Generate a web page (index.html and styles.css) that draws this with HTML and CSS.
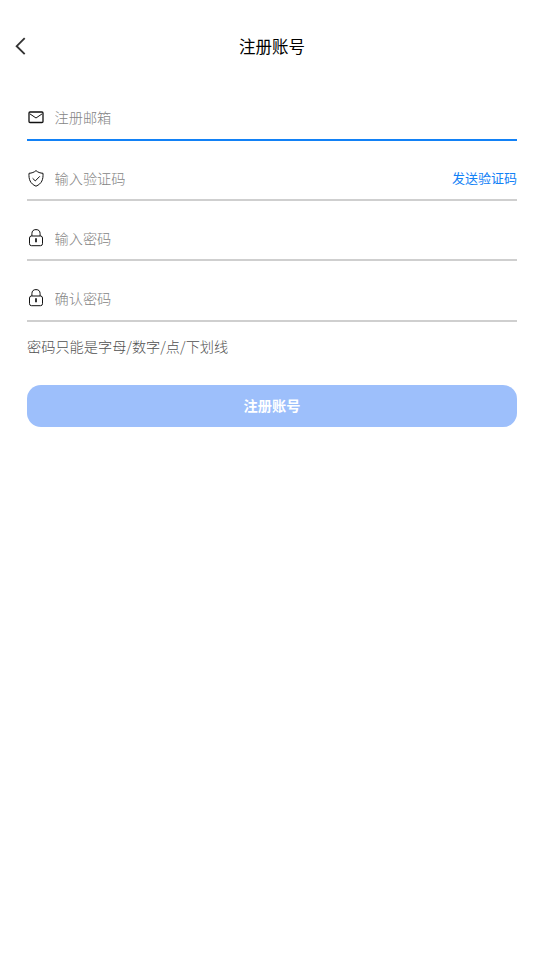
FILE: index.html
```html
<!DOCTYPE html>
<html lang="zh-CN">
<head>
<meta charset="utf-8">
<title>注册账号</title>
<link rel="stylesheet" href="styles.css">
</head>
<body>
<header class="bar">
  <button class="back" aria-label="返回"><svg width="12" height="20" viewBox="0 0 12 20"><path d="M9.700 2.200 1.700 10.200l8 8"/></svg></button>
  <h1 class="title">注册账号</h1>
</header>
<main class="form">
  <div class="field active">
    <svg class="icon" viewBox="0 0 18 18"><rect x="2" y="4" width="14" height="10.500" rx="1"/><path class="thin" d="m2.800 5.800 6.200 4.200 6.200-4.200"/></svg>
    <input type="text" placeholder="注册邮箱">
  </div>
  <div class="field">
    <svg class="icon" viewBox="0 0 18 18"><path class="thin" d="M9 1.600C7.300 3.200 4.700 4.200 2 4.300c-.3 6 1 10.300 7 12.900 6-2.600 7.300-6.900 7-12.900-2.700-.1-5.300-1.100-7-2.700ZM5.600 9.300l2.700 2.600 4.500-4.600"/></svg>
    <input type="text" placeholder="输入验证码">
    <button class="send">发送验证码</button>
  </div>
  <div class="field">
    <svg class="icon" viewBox="0 0 18 18"><path class="thin" d="M4.900 7V4.700a4.100 4.100 0 0 1 8.200 0V7"/><rect class="thin" x="2.500" y="7" width="13" height="9.700" rx="2"/><path class="key" d="M9 9.200v4"/></svg>
    <input type="password" placeholder="输入密码">
  </div>
  <div class="field">
    <svg class="icon" viewBox="0 0 18 18"><path class="thin" d="M4.900 7V4.700a4.100 4.100 0 0 1 8.200 0V7"/><rect class="thin" x="2.500" y="7" width="13" height="9.700" rx="2"/><path class="key" d="M9 9.200v4"/></svg>
    <input type="password" placeholder="确认密码">
  </div>
  <p class="hint">密码只能是字母/数字/点/下划线</p>
  <button class="submit">注册账号</button>
</main>
</body>
</html>
```
FILE: styles.css
```css
* { box-sizing: border-box; }
body { margin: 0; min-height: 980px; background: #fff; color: #000; font-family: "Noto Sans CJK SC", sans-serif; }
button, input { font: inherit; border: 0; padding: 0; background: none; }
svg { display: block; fill: none; stroke: #111; }
.bar { display: grid; grid-template-columns: 39px 1fr 41px; align-items: center; height: 52px; margin-top: 20px; }
.back { padding-left: 15px; }
.back svg { stroke: #333; stroke-width: 1.9; }
.title { margin: 0; text-align: center; font-size: 16.5px; line-height: 24px; font-weight: 400; }
.form { padding: 23.6px 29px 0 27px; }
.field { display: flex; align-items: center; height: 45px; margin-bottom: 15.45px; border-bottom: 2px solid #cfcfcf; }
.active { border-color: #1281f6; }
.icon { width: 18px; height: 18px; margin-right: 9.5px; stroke-width: 1.3; }
.thin { stroke-width: 1; }
.key { stroke-width: 1.7; }
.field input { flex: 1; min-width: 0; height: 24px; font-size: 14.2px; font-weight: 300; outline: 0; }
.field input::placeholder { color: #858585; opacity: 1; }
.send { color: #1281f6; font-size: 13px; }
.hint { margin: -1px 0 0; font-size: 14.2px; line-height: 21px; font-weight: 300; color: #505050; }
.submit { display: block; width: 100%; height: 42px; margin-top: 27.4px; padding-bottom: 1px; border-radius: 14px; background: #9dbffb; color: #fff; font-size: 14.2px; font-weight: 700; }
```
